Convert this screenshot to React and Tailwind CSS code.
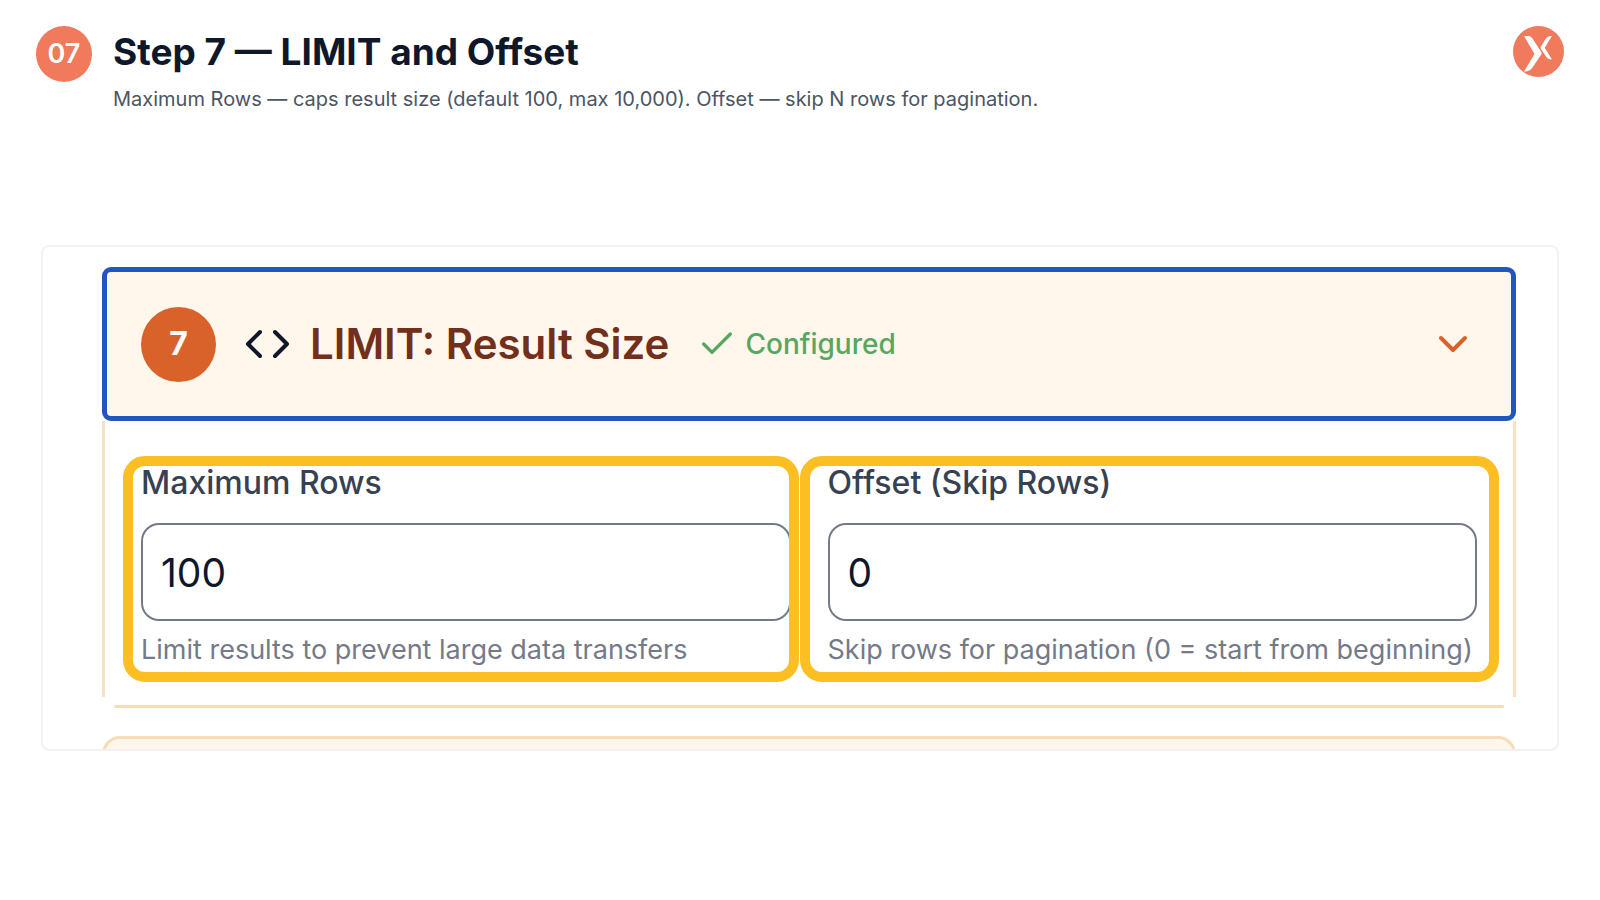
import React, { useState } from 'react'
import { Check, ChevronDown } from 'lucide-react'

const fields = [
  {
    id: 'max-rows',
    label: 'Maximum Rows',
    value: '100',
    hint: 'Limit results to prevent large data transfers',
    ring: '-left-[18px] -right-2',
  },
  {
    id: 'offset',
    label: 'Offset (Skip Rows)',
    value: '0',
    hint: 'Skip rows for pagination (0 = start from beginning)',
    ring: '-left-7 -right-[22px]',
  },
]

const Logo = () => (
  <svg className="w-[51px] h-[51px] shrink-0" viewBox="0 0 51 51" role="img" aria-label="Logo">
    <circle cx="25.5" cy="25.5" r="25.5" fill="#f1795c" />
    <path d="M11 10h4.500c1.800 0 3 .9 4 2.400l8.600 13.400c.7 1 .7 1.800 0 2.900L19.500 41.500c-1.500 2.300-3.500 4-8.500 4l10.500-17.500z" fill="#fff" />
    <path d="M39 10c-3.500 0-5 1-6.500 3l-4.500 7.500c-.6.9-.6 1.600 0 2.500l5 7.500c1.400 2 3 3 6 3L31.700 21.700z" fill="#fff" />
  </svg>
)

const Field = ({ field }) => {
  const [value, setValue] = useState(field.value)

  return (
    <div className="relative min-w-0">
      <label htmlFor={field.id} className="block text-[32px] leading-10 font-medium text-[#374151] whitespace-nowrap">
        {field.label}
      </label>
      <input
        id={field.id}
        type="text"
        inputMode="numeric"
        value={value}
        onChange={(e) => setValue(e.target.value)}
        className="block w-full h-[98px] mt-5 px-[18px] rounded-[18px] border-2 border-[#747a87] bg-white text-[39px] text-[#0f172a] outline-none"
      />
      <p className="mt-[11px] mb-[2px] text-[27px] leading-9 text-[#747a87] whitespace-nowrap">{field.hint}</p>
      <div className={`absolute -top-[7px] -bottom-[12px] rounded-[22px] border-10 border-[#fbbf24] pointer-events-none ${field.ring}`} />
    </div>
  )
}

const App = () => {
  return (
    <main className="min-h-screen bg-white px-9 pt-[26px] font-['Inter',sans-serif]">
      <header className="flex items-start">
        <div className="flex size-14 shrink-0 items-center justify-center rounded-full bg-[#f1795c] text-[27px] font-semibold text-white">07</div>
        <div className="ml-[21px] flex-1">
          <h1 className="text-[37px] leading-[52px] font-bold text-[#0f172a]">Step 7 — LIMIT and Offset</h1>
          <p className="mt-[5px] text-[20px] leading-8 text-[#4b5563]">
            Maximum Rows — caps result size (default 100, max 10,000). Offset — skip N rows for pagination.
          </p>
        </div>
        <Logo />
      </header>

      <section className="mx-[5px] mt-[130px] overflow-hidden rounded-lg border-2 border-[#f1f2f4] pt-5 pl-[59px] pr-[41px]">
        <button type="button" className="flex w-full h-[154px] items-center rounded-[9px] border-5 border-[#1f57bf] bg-[#fff6ec] px-[34px] text-left">
          <span className="flex size-[75px] shrink-0 items-center justify-center rounded-full bg-[#d9622b] text-[32px] font-bold text-white">7</span>
          <svg className="ml-7 w-12 h-12 text-[#0f172a]" viewBox="0 0 48 48" fill="none" stroke="currentColor" strokeWidth="4" strokeLinecap="round" strokeLinejoin="round" aria-hidden="true">
            <path d="M16 12 4 24l12 12M31 12l12 12-12 12" />
          </svg>
          <span className="ml-[18px] text-[42px] leading-none font-semibold text-[#722f1a] whitespace-nowrap">LIMIT: Result Size</span>
          <Check className="ml-7 size-10 shrink-0 text-[#56a75f]" strokeWidth={2} aria-hidden="true" />
          <span className="ml-2 text-[28px] leading-none font-medium text-[#56a75f]">Configured</span>
          <ChevronDown className="ml-auto size-12 shrink-0 text-[#d9622b]" strokeWidth={2} aria-hidden="true" />
        </button>

        <div className="grid grid-cols-2 gap-[37px] border-x-3 border-[#fae0bf] px-9 pt-[42px] pb-[27px]">
          {fields.map((field) => (
            <Field key={field.id} field={field} />
          ))}
        </div>
        <div className="mx-3 mt-2 h-[3px] rounded-full bg-[#f8dcb8]" />

        {/* top edge of the next step, cut off by the panel */}
        <div className="mt-7 -mb-[27px] h-10 rounded-t-[18px] border-3 border-b-0 border-[#f8dcb8] bg-[#fff6ec]" />
      </section>
    </main>
  )
}

export default App
